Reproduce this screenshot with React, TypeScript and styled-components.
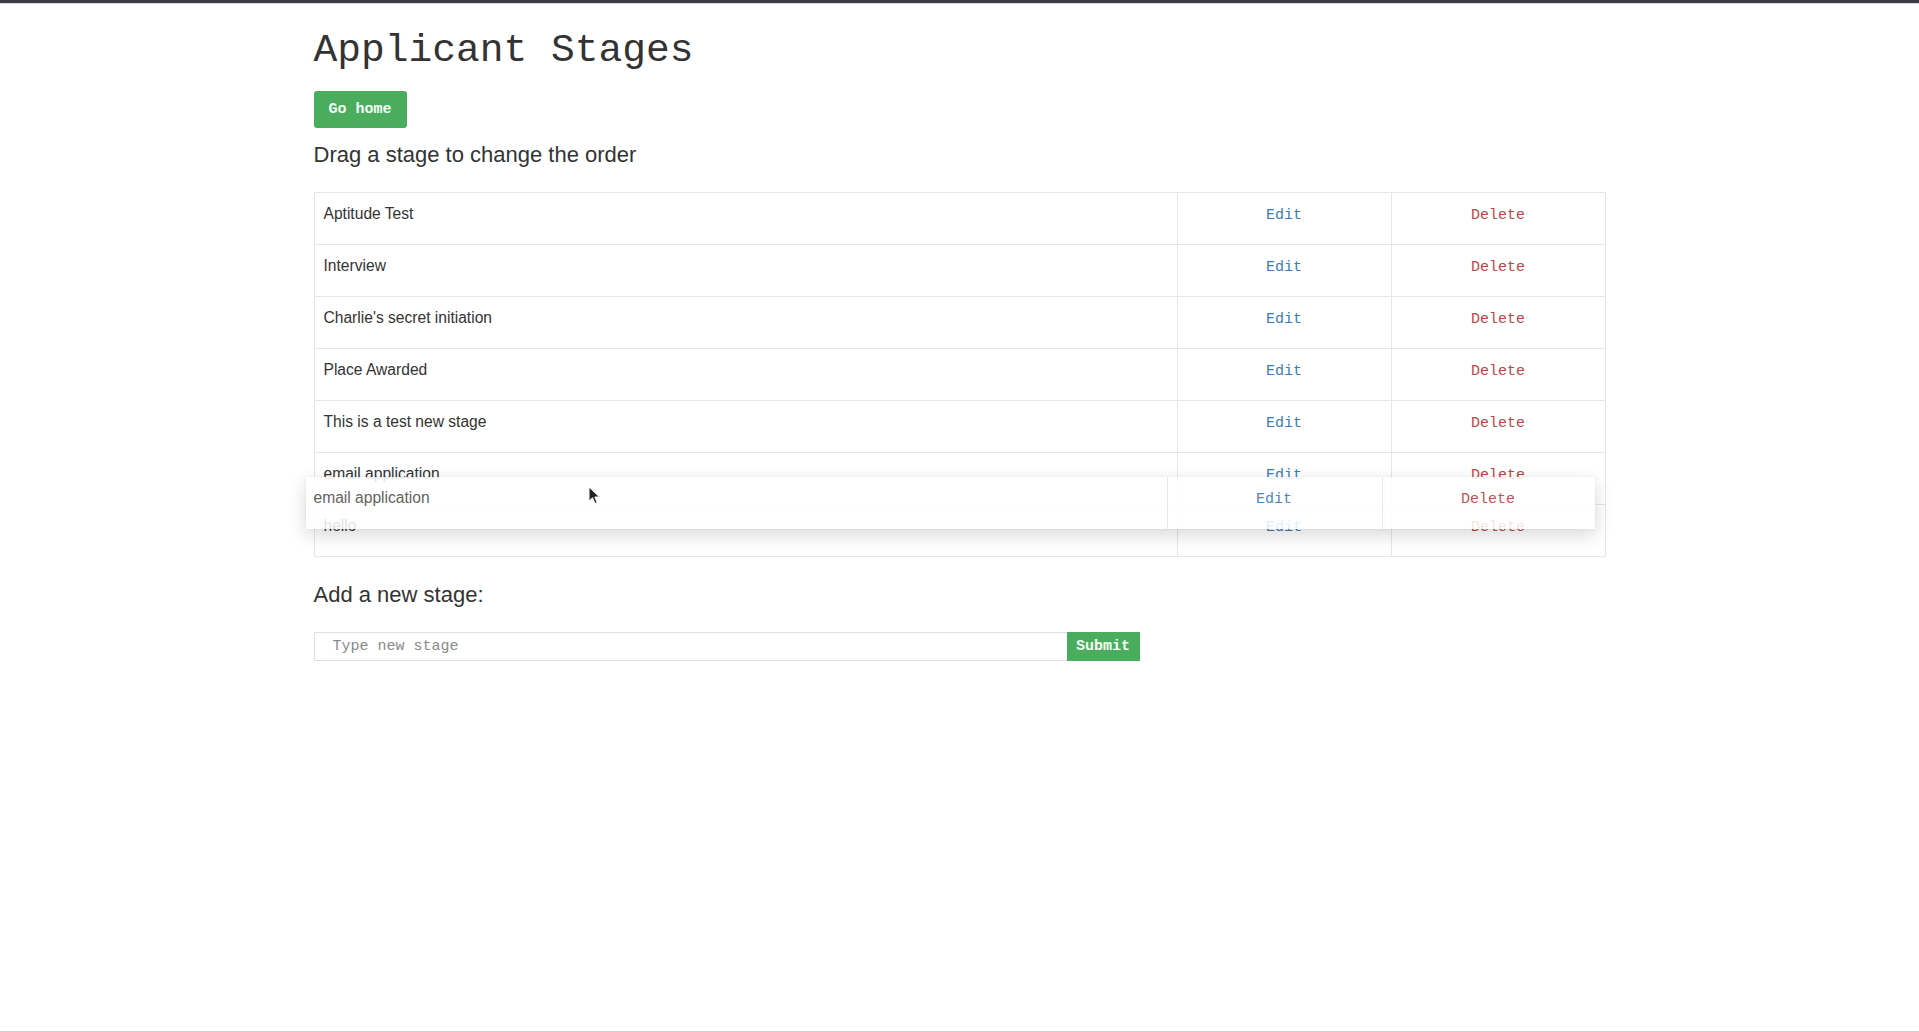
import styled, { createGlobalStyle } from 'styled-components';

const GlobalStyle = createGlobalStyle`
  html, body {
    margin: 0;
    padding: 0;
    background: #ffffff;
  }
  body {
    font-family: 'Liberation Sans', Arial, sans-serif;
    color: #333;
  }
`;

const TopBar = styled.div`
  height: 3px;
  background: #3c3c40;
  border-bottom: 1px solid #d8dae0;
`;

const Page = styled.div`
  width: 1292px;
  margin: 0 auto;
  padding-top: 23px;
  display: flex;
  flex-direction: column;
  align-items: flex-start;
`;

const Title = styled.h1`
  margin: 0;
  font-family: 'Liberation Mono', 'Courier New', monospace;
  font-weight: 400;
  font-size: 39.6px;
  line-height: 48px;
  color: #333;
`;

const GreenButton = styled.button<{ $w: number; $h: number; $radius?: number }>`
  width: ${(p) => p.$w}px;
  height: ${(p) => p.$h}px;
  border: none;
  border-radius: ${(p) => p.$radius ?? 0}px;
  background: #4aad5e;
  color: #f4fff6;
  font-family: 'Liberation Mono', 'Courier New', monospace;
  font-weight: 700;
  font-size: 15px;
  padding: 0;
  cursor: pointer;
`;

const HomeButton = styled(GreenButton)`
  margin-top: 16px;
`;

const SubHeading = styled.h3<{ $top: number }>`
  margin: ${(p) => p.$top}px 0 0;
  font-size: 22px;
  line-height: 26px;
  font-weight: 400;
  color: #333;
`;

const TableWrap = styled.div`
  position: relative;
  box-sizing: border-box;
  width: 100%;
  margin-top: 24px;
  border: 1px solid #e6e6e6;
  border-bottom: none;
`;

const Row = styled.div`
  display: grid;
  grid-template-columns: 862px 214px 1fr;
  height: 51px;
  border-bottom: 1px solid #e6e6e6;
`;

const Cell = styled.div<{ $center?: boolean; $divider?: boolean }>`
  padding: 12px 9px 0;
  font-size: 15.6px;
  line-height: 17px;
  color: #333;
  text-align: ${(p) => (p.$center ? 'center' : 'left')};
  border-left: ${(p) => (p.$divider ? '1px solid #e6e6e6' : 'none')};
`;

const ActionLink = styled.span<{ $kind: 'edit' | 'delete' }>`
  font-family: 'Liberation Mono', 'Courier New', monospace;
  font-size: 15px;
  color: ${(p) => (p.$kind === 'edit' ? '#3b7cbb' : '#b8474a')};
  cursor: pointer;
`;

const DragGhost = styled.div`
  position: absolute;
  left: -9px;
  top: 284px;
  width: 1289px;
  height: 52px;
  display: grid;
  grid-template-columns: 861px 215px 1fr;
  background: rgba(255, 255, 255, 0.93);
  box-shadow: 0 6px 18px rgba(0, 0, 0, 0.16), 0 0 3px rgba(0, 0, 0, 0.06);
  opacity: 0.92;
`;

const GhostCell = styled(Cell)`
  padding-left: 8px;
  color: #555;
`;

const Cursor = styled.svg`
  position: absolute;
  left: 282px;
  top: 9px;
`;

const AddForm = styled.form`
  display: flex;
  margin-top: 24px;
`;

const StageInput = styled.input`
  box-sizing: border-box;
  width: 753px;
  height: 29px;
  border: 1px solid #e0e0e0;
  border-right: none;
  padding: 0 18px;
  font-family: 'Liberation Mono', 'Courier New', monospace;
  font-size: 15px;
  color: #333;
  outline: none;
  &::placeholder {
    color: #8a8a8a;
  }
`;

const BottomLine = styled.div`
  position: fixed;
  left: 0;
  right: 0;
  bottom: 0;
  height: 1px;
  background: #cfcfcf;
`;

const stages = [
  'Aptitude Test',
  'Interview',
  "Charlie's secret initiation",
  'Place Awarded',
  'This is a test new stage',
  'email application',
  'hello',
];

const App = () => {
  return (
    <>
      <GlobalStyle />
      <TopBar />
      <Page>
        <Title>Applicant Stages</Title>
        <HomeButton $w={93} $h={37} $radius={3}>
          Go home
        </HomeButton>
        <SubHeading $top={14}>Drag a stage to change the order</SubHeading>
        <TableWrap>
          {stages.map((s) => (
            <Row key={s}>
              <Cell>{s}</Cell>
              <Cell $center $divider>
                <ActionLink $kind="edit">Edit</ActionLink>
              </Cell>
              <Cell $center $divider>
                <ActionLink $kind="delete">Delete</ActionLink>
              </Cell>
            </Row>
          ))}
          <DragGhost>
            <GhostCell>email application</GhostCell>
            <GhostCell $center $divider>
              <ActionLink $kind="edit">Edit</ActionLink>
            </GhostCell>
            <GhostCell $center $divider>
              <ActionLink $kind="delete">Delete</ActionLink>
            </GhostCell>
            <Cursor width="13" height="19" viewBox="0 0 13 19">
              <path
                d="M1 1 L1 15 L4.5 11.8 L7 17.5 L9.2 16.5 L6.8 11 L11.5 11 Z"
                fill="#111"
                stroke="#fff"
                strokeWidth="1"
              />
            </Cursor>
          </DragGhost>
        </TableWrap>
        <SubHeading $top={25}>Add a new stage:</SubHeading>
        <AddForm onSubmit={(e) => e.preventDefault()}>
          <StageInput placeholder="Type new stage" />
          <GreenButton $w={73} $h={29} type="submit">
            Submit
          </GreenButton>
        </AddForm>
      </Page>
      <BottomLine />
    </>
  );
};

export default App;
